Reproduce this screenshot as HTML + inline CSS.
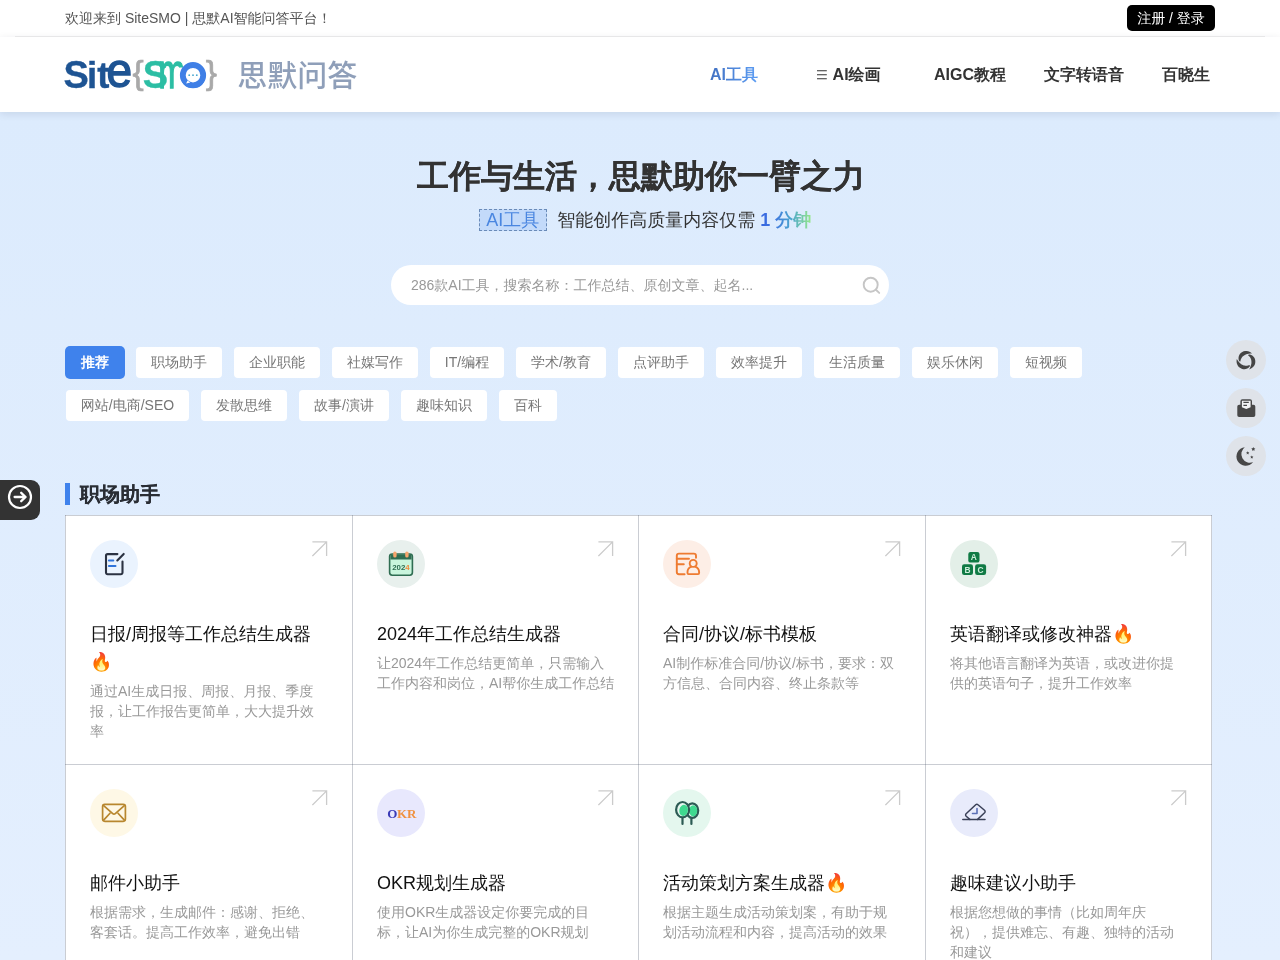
<!DOCTYPE html>
<html lang="zh-CN">
<head>
<meta charset="utf-8">
<title>SiteSMO | 思默AI智能问答平台</title>
<style>
*{box-sizing:border-box;margin:0;padding:0}
html,body{width:1280px;height:960px;overflow:hidden}
body{font-family:"Liberation Sans","WenQuanYi Zen Hei",sans-serif;font-size:14px;color:#333;background:linear-gradient(180deg,#dcebfd 112px,#e4effe 960px) #e0edfd;position:relative}
b,.b{font-weight:800}
a{text-decoration:none;color:inherit}
#wrap{position:absolute;left:0;top:0;width:1280px;height:960px;overflow:hidden;will-change:transform}
.topbar{position:absolute;left:0;top:0;width:1280px;height:37px;background:#fff}
.topbar .line{position:absolute;left:15px;top:36px;width:1250px;height:1px;background:#eee}
.topbar .welcome{position:absolute;left:65px;top:0;line-height:36px;font-size:14px;color:#555}
.topbar .login{position:absolute;left:1127px;top:5px;width:88px;height:26px;background:#000;color:#fff;border-radius:5px;line-height:26px;text-align:center;font-size:14px}
.header{position:absolute;left:0;top:37px;width:1280px;height:75px;background:#fff;box-shadow:0 2px 8px rgba(0,20,50,.1)}
.logo{position:absolute;left:60px;top:13px;width:310px;height:50px}
.nav a{position:absolute;top:0;line-height:75px;font-size:16px;font-weight:800;color:#333;white-space:nowrap}
.nav a.on{background:linear-gradient(90deg,#4271c2,#5c9df4);-webkit-background-clip:text;background-clip:text;color:transparent}
.hero h1{position:absolute;left:1px;top:153px;width:1280px;-webkit-text-stroke:.14px #333;text-align:center;font-size:32px;line-height:46px;font-weight:800;color:#333}
.hero .sub{position:absolute;left:0;top:206px;width:1280px;padding-left:10px;text-align:center;font-size:18px;line-height:28px;color:#333}
.hero .sub .tagbox{display:inline-block;border:1px dashed #6a8bb8;background:#c3dafa;color:#4a86e0;padding:0 6.5px;line-height:20px;margin-right:5.5px;font-size:18px}
.hero .sub .num{font-weight:800;color:#3b6fd0}
.hero .sub .min{font-weight:800;background:linear-gradient(90deg,#3766e0 0%,#3f76e0 28%,#4ba6cc 62%,#98e88a 100%);-webkit-background-clip:text;background-clip:text;color:transparent}
.search{position:absolute;left:391px;top:265px;width:498px;height:40px;border-radius:20px;background:#fff}
.search span{position:absolute;left:20px;top:0;line-height:40px;font-size:14px;color:#999}
.search svg{position:absolute;left:471px;top:11px}
.tags a{position:absolute;height:31px;line-height:31px;border-radius:4px;background:#fff;color:#777;font-size:14px;text-align:center;white-space:nowrap}
.tags a.on{background:#3f82ec;color:#fff;font-weight:800;height:33px;line-height:33px;border-radius:5px}
.sect{position:absolute;left:65px;top:483px;height:22px;border-left:5px solid #3f82ec;padding-left:10px;font-size:20px;line-height:22px;font-weight:800;color:#2a2e35;-webkit-text-stroke:.1px #2a2e35}
.grid{position:absolute;left:65px;top:515px;width:1147px;height:445px;background:#fff}
.vl{position:absolute;top:0;width:1px;height:445px;background:rgba(80,90,110,.3)}
.hl{position:absolute;left:0;width:1147px;height:1px;background:rgba(80,90,110,.3)}
.card{position:absolute;height:248px;padding:24px 0 0 24px}
.card .ic{position:relative;width:48px;height:48px;border-radius:50%}
.card .ic svg{position:absolute;left:0;top:0}
.card .arr{position:absolute;right:24px;top:25px}
.card h3{margin-top:32px;width:237.6px;font-size:18px;line-height:28px;font-weight:400;color:#111}
.card p{margin-top:5px;width:237.6px;font-size:14px;line-height:20px;color:#999}
.ltab{position:absolute;left:0;top:480px;width:40px;height:40px;background:#333;border-radius:0 9px 9px 0}
.rbtn{position:absolute;left:1226px;width:40px;height:40px;border-radius:50%;background:#dfe3e9}
</style>
</head>
<body>
<div id="wrap">
<div class="topbar">
  <div class="welcome">欢迎来到 SiteSMO | 思默AI智能问答平台！</div>
  <div class="login">注册 / 登录</div>
  <div class="line"></div>
</div>
<div class="header">
  <div class="logo"><svg width="310" height="50" viewBox="0 0 310 50" font-family="Liberation Sans, sans-serif" font-weight="bold"><defs><clipPath id="mc"><rect x="96" y="0" width="30" height="17.500"/><rect x="96" y="17.500" width="22" height="33"/></clipPath></defs><text x="3.600" y="37.700" font-size="38" fill="#1e5493" stroke="#1e5493" stroke-width=".3">S</text><text x="27 37.300" y="37.700" font-size="36.500" fill="#1e5493" stroke="#1e5493" stroke-width=".4">it</text><text transform="translate(46.600 37.400) scale(.93 .955)" font-size="49.500" font-weight="normal" fill="#1e5493" stroke="#1e5493" stroke-width="1.500">e</text><text x="72.600" y="33.800" font-size="33.500" font-weight="normal" fill="#a9a9a9" stroke="#a9a9a9" stroke-width=".7">{</text><text x="145.800" y="33.800" font-size="33.500" font-weight="normal" fill="#a9a9a9" stroke="#a9a9a9" stroke-width=".7">}</text><text x="82.700" y="37.700" font-size="38" fill="#2cbea4" stroke="#2cbea4" stroke-width=".3">S</text><g clip-path="url(#mc)"><text transform="translate(98.600 37.500) scale(.64 .975)" font-size="49.500" font-weight="normal" fill="#2cbea4" stroke="#2cbea4" stroke-width="1.600">m</text></g><text x="119.400" y="37.900" font-size="35" fill="#3f7fe6">O</text><circle cx="133" cy="25.200" r="10.200" fill="#fff" stroke="#3f7fe6" stroke-width="5.800"/><path d="M127.600 30.400l-1.500 3.200 4.200-1.200z" fill="#fff"/><circle cx="129.200" cy="25.200" r=".9" fill="#49a6cf"/><circle cx="133" cy="25.200" r=".9" fill="#49a6cf"/><circle cx="136.800" cy="25.200" r=".9" fill="#49a6cf"/><text x="177.300" y="36" font-family="Liberation Sans, Noto Sans CJK SC, WenQuanYi Zen Hei, sans-serif" font-weight="500" font-size="30" fill="#8f9fb9">思默问答</text></svg></div>
  <div class="nav">
    <a class="on" style="left:710px">AI工具</a>
    <a style="left:817px"><svg width="10" height="10" viewBox="0 0 10 10" style="position:absolute;left:0;top:32.5px" stroke="#333" stroke-width="1.100"><path d="M0 .7h9.800M0 4.800h9.800M0 8.800h9.800"/></svg><span style="margin-left:15.600px">AI绘画</span></a>
    <a style="left:934px">AIGC教程</a>
    <a style="left:1044px">文字转语音</a>
    <a style="left:1162px">百晓生</a>
  </div>
</div>
<div class="hero">
  <h1>工作与生活，思默助你一臂之力</h1>
  <div class="sub"><span class="tagbox">AI工具</span> 智能创作高质量内容仅需 <span class="min">1 分钟</span></div>
</div>
<div class="search"><span>286款AI工具，搜索名称：工作总结、原创文章、起名...</span>
<svg width="20" height="20" viewBox="0 0 20 20" fill="none" stroke="#c6c6c6" stroke-width="1.900" stroke-linecap="round"><circle cx="8.700" cy="8.700" r="7"/><path d="M13.900 13.800l3.300 3.100"/></svg></div>
<div class="tags">
  <a class="on" style="left:65px;top:346px;width:60px">推荐</a>
  <a style="left:136px;top:347px;width:86px">职场助手</a>
  <a style="left:234px;top:347px;width:86px">企业职能</a>
  <a style="left:332px;top:347px;width:86px">社媒写作</a>
  <a style="left:430px;top:347px;width:74px">IT/编程</a>
  <a style="left:516px;top:347px;width:90px">学术/教育</a>
  <a style="left:618px;top:347px;width:86px">点评助手</a>
  <a style="left:716px;top:347px;width:86px">效率提升</a>
  <a style="left:814px;top:347px;width:86px">生活质量</a>
  <a style="left:912px;top:347px;width:86px">娱乐休闲</a>
  <a style="left:1010px;top:347px;width:72px">短视频</a>
  <a style="left:66px;top:390px;width:123px">网站/电商/SEO</a>
  <a style="left:201px;top:390px;width:86px">发散思维</a>
  <a style="left:299px;top:390px;width:90px">故事/演讲</a>
  <a style="left:401px;top:390px;width:86px">趣味知识</a>
  <a style="left:499px;top:390px;width:58px">百科</a>
</div>
<div class="sect">职场助手</div>
<div class="grid">
<div class="vl" style="left:0px"></div><div class="vl" style="left:287px"></div><div class="vl" style="left:573px"></div><div class="vl" style="left:860px"></div><div class="vl" style="left:1146px"></div><div class="hl" style="top:0"></div><div class="hl" style="top:249px"></div>
<div class="card" style="left:1px;top:1px;width:286px"><div class="ic" style="background:#eaf3fe"><svg width="48" height="48" viewBox="0 0 48 48" fill="none" stroke-linecap="round" stroke-linejoin="round"><path d="M27.4 14.1H17.6a1.6 1.6 0 0 0-1.6 1.6v16.9a1.6 1.6 0 0 0 1.6 1.6h13.3a1.6 1.6 0 0 0 1.6-1.6V21.6" stroke="#2b3242" stroke-width="2.1"/><path d="M33.7 13.9l-6.4 6.6" stroke="#2b3242" stroke-width="2.1"/><path d="M18.9 20.6h4.4M18.9 26.1h6.6" stroke="#2f73d9" stroke-width="2"/></svg></div><svg class="arr" width="16" height="16" viewBox="0 0 16 16" fill="none" stroke="#cbcbcb" stroke-width="1.300"><path d="M.4.900h14.200v14M14.600.900L.4 15.100"/></svg><h3>日报/周报等工作总结生成器🔥</h3><p>通过AI生成日报、周报、月报、季度报，让工作报告更简单，大大提升效率</p></div>
<div class="card" style="left:288px;top:1px;width:285px"><div class="ic" style="background:#e8f0ed"><svg width="48" height="48" viewBox="0 0 48 48"><rect x="12.6" y="14" width="22.8" height="21.2" rx="2.6" fill="#c9f5dd" stroke="#2f6d52" stroke-width="1.6"/><path d="M13.4 19.6V16.4a1.8 1.8 0 0 1 1.8-1.8h17.6a1.8 1.8 0 0 1 1.8 1.8v3.2z" fill="#2f6d52"/><rect x="16.200" y="11.400" width="3.400" height="6.200" rx="1.700" fill="#f6a56d"/><rect x="28.200" y="11.400" width="3.400" height="6.200" rx="1.700" fill="#f6a56d"/><text x="15.2" y="29.6" font-family="Liberation Sans, sans-serif" font-weight="bold" font-size="6.6" fill="#2f6d52" textLength="17.5" lengthAdjust="spacingAndGlyphs">202<tspan fill="#f08a3c">4</tspan></text></svg></div><svg class="arr" width="16" height="16" viewBox="0 0 16 16" fill="none" stroke="#cbcbcb" stroke-width="1.300"><path d="M.4.900h14.200v14M14.600.900L.4 15.100"/></svg><h3>2024年工作总结生成器</h3><p>让2024年工作总结更简单，只需输入工作内容和岗位，AI帮你生成工作总结</p></div>
<div class="card" style="left:574px;top:1px;width:286px"><div class="ic" style="background:#fdeee6"><svg width="48" height="48" viewBox="0 0 48 48" fill="none" stroke="#ee7b31" stroke-width="1.9" stroke-linecap="round" stroke-linejoin="round"><path d="M21.6 34.2H16a2.2 2.2 0 0 1-2.2-2.2V15.8A2.2 2.2 0 0 1 16 13.6h14.8a2.2 2.2 0 0 1 2.2 2.2v2"/><path d="M13.8 18.8h12.2M13.8 24.3h7"/><circle cx="30.2" cy="23.4" r="3.5"/><path d="M28.4 26.6c-2.6 1-3.9 2.8-3.9 5.400v1.1a1 1 0 0 0 1 1h9.600a1 1 0 0 0 1-1V32c0-2.600-1.400-4.400-4-5.400"/></svg></div><svg class="arr" width="16" height="16" viewBox="0 0 16 16" fill="none" stroke="#cbcbcb" stroke-width="1.300"><path d="M.4.900h14.200v14M14.600.900L.4 15.100"/></svg><h3>合同/协议/标书模板</h3><p>AI制作标准合同/协议/标书，要求：双方信息、合同内容、终止条款等</p></div>
<div class="card" style="left:861px;top:1px;width:285px"><div class="ic" style="background:#e3efe8"><svg width="48" height="48" viewBox="0 0 48 48" font-family="Liberation Sans, sans-serif" font-weight="bold" font-size="8.4" text-anchor="middle" fill="#cdeeda"><rect x="18.300" y="11.900" width="11.200" height="10.700" rx="2.200" fill="#0f7a44"/><rect x="12" y="24.300" width="11" height="10.700" rx="2.200" fill="#0f7a44"/><rect x="25.100" y="24.300" width="11" height="10.700" rx="2.200" fill="#0f7a44"/><text x="23.900" y="20.300">A</text><text x="17.500" y="32.700">B</text><text x="30.600" y="32.700">C</text></svg></div><svg class="arr" width="16" height="16" viewBox="0 0 16 16" fill="none" stroke="#cbcbcb" stroke-width="1.300"><path d="M.4.900h14.200v14M14.600.900L.4 15.100"/></svg><h3>英语翻译或修改神器🔥</h3><p>将其他语言翻译为英语，或改进你提供的英语句子，提升工作效率</p></div>
<div class="card" style="left:1px;top:250px;width:286px"><div class="ic" style="background:#fef8e6"><svg width="48" height="48" viewBox="0 0 48 48" fill="none" stroke="#b8872f" stroke-width="1.7" stroke-linecap="round" stroke-linejoin="round"><rect x="12.600" y="15.300" width="22.800" height="17" rx="2.200"/><path d="M13.400 16.300l9.300 8.300a2 2 0 0 0 2.600 0l9.300-8.300"/><path d="M13.400 31.400l6.600-7.200M34.600 31.400L28 24.200"/></svg></div><svg class="arr" width="16" height="16" viewBox="0 0 16 16" fill="none" stroke="#cbcbcb" stroke-width="1.300"><path d="M.4.900h14.200v14M14.600.900L.4 15.100"/></svg><h3>邮件小助手</h3><p>根据需求，生成邮件：感谢、拒绝、客套话。提高工作效率，避免出错</p></div>
<div class="card" style="left:288px;top:250px;width:285px"><div class="ic" style="background:#e8e8fd"><svg width="48" height="48" viewBox="0 0 48 48"><text x="10.300" y="28.900" font-family="Liberation Serif, serif" font-weight="bold" font-size="13" fill="#f0913f" textLength="29" lengthAdjust="spacing"><tspan fill="#3b3bb7">O</tspan>KR</text></svg></div><svg class="arr" width="16" height="16" viewBox="0 0 16 16" fill="none" stroke="#cbcbcb" stroke-width="1.300"><path d="M.4.900h14.200v14M14.600.900L.4 15.100"/></svg><h3>OKR规划生成器</h3><p>使用OKR生成器设定你要完成的目标，让AI为你生成完整的OKR规划</p></div>
<div class="card" style="left:574px;top:250px;width:286px"><div class="ic" style="background:#e4f7ee"><svg width="48" height="48" viewBox="0 0 48 48" stroke="#2c5b54" stroke-width="2.200" stroke-linecap="round"><ellipse cx="29.300" cy="21.600" rx="5.900" ry="7.300" fill="#e6f8f0"/><ellipse cx="30.200" cy="21.800" rx="4" ry="5.600" fill="#3fd98f" stroke="none"/><path d="M28.400 29.600v5.400M19.500 29.400v5.600" fill="none"/><ellipse cx="19.600" cy="20.700" rx="6.500" ry="7.700" fill="#e6f8f0"/><ellipse cx="20.600" cy="21.400" rx="4.300" ry="5.600" fill="#3fd98f" stroke="none" transform="rotate(14 20.600 21.400)"/></svg></div><svg class="arr" width="16" height="16" viewBox="0 0 16 16" fill="none" stroke="#cbcbcb" stroke-width="1.300"><path d="M.4.900h14.200v14M14.600.900L.4 15.100"/></svg><h3>活动策划方案生成器🔥</h3><p>根据主题生成活动策划案，有助于规划活动流程和内容，提高活动的效果</p></div>
<div class="card" style="left:861px;top:250px;width:285px"><div class="ic" style="background:#e8ebfb"><svg width="48" height="48" viewBox="0 0 48 48" fill="none" stroke="#3a4057" stroke-width="1.500" stroke-linecap="round" stroke-linejoin="round"><path d="M12.800 30.500h22.200"/><path d="M19.800 30.400l-3.600-3.100a1.700 1.700 0 0 1-.1-2.500l9.600-9.100a1.700 1.700 0 0 1 2.300 0l6.500 5.600a1.700 1.700 0 0 1 .1 2.500l-7 6.600"/><path d="M27 19.600v4.900h-4.500" stroke="#5b70b6" stroke-width="1.600"/></svg></div><svg class="arr" width="16" height="16" viewBox="0 0 16 16" fill="none" stroke="#cbcbcb" stroke-width="1.300"><path d="M.4.900h14.200v14M14.600.900L.4 15.100"/></svg><h3>趣味建议小助手</h3><p>根据您想做的事情（比如周年庆祝），提供难忘、有趣、独特的活动和建议</p></div>
</div>
<div class="ltab"><svg width="40" height="40" viewBox="0 0 40 40" fill="none" stroke="#fff" stroke-linecap="round" stroke-linejoin="round"><circle cx="20" cy="17" r="11" stroke-width="2.200"/><path d="M14.600 17h10.400M21.200 12.800l4.400 4.200-4.400 4.200" stroke-width="2.300"/></svg></div>
<div class="rbtn" style="top:340px"><svg width="40" height="40" viewBox="-20 -20.600 40 40" fill="#454545"><g id="bl"><path d="M-6.77 0.65L-7.21 -0.45L-7.46 -1.66L-7.47 -2.96L-7.23 -4.28L-6.73 -5.58L-5.96 -6.79L-4.93 -7.81L-3.70 -8.62L-2.34 -9.24L-0.87 -9.58L0.65 -9.59L2.14 -9.33L3.55 -8.82L4.86 -8.09L6.01 -7.16L4.19 -7.07L2.68 -6.86L1.40 -6.59L0.29 -6.28L-0.69 -5.89L-1.55 -5.40L-2.31 -4.88L-3.01 -4.35L-3.62 -3.75L-4.13 -3.07L-4.57 -2.36L-4.98 -1.62L-5.30 -0.81L-5.49 0.06L-5.53 0.98z"/></g><use href="#bl" transform="rotate(120)"/><use href="#bl" transform="rotate(240)"/></svg></div>
<div class="rbtn" style="top:388px"><svg width="40" height="40" viewBox="0 0 40 40"><path d="M14.400 13.300a2 2 0 0 1 2-2h7.600a2 2 0 0 1 2 2v3.400h1.500a1.800 1.800 0 0 1 1.800 1.800v8.800a1.800 1.800 0 0 1-1.800 1.800H13.100a1.800 1.800 0 0 1-1.800-1.800v-8.800a1.800 1.800 0 0 1 1.800-1.800h1.300z" fill="#484848"/><path d="M15.900 12.700h8.700v6.600l-4.350 1.700-4.350-1.700z" fill="#f2f3f5"/><path d="M17.400 14.300h5.400M17.400 17.300h3.600" stroke="#484848" stroke-width="1.300"/></svg></div>
<div class="rbtn" style="top:436px"><svg width="40" height="40" viewBox="0 0 40 40" fill="#474747"><path d="M18.800 11.200a9.300 9.300 0 1 0 8.300 14.900a8.600 8.600 0 0 1-8.300-14.900z"/><path id="st" d="M0-1.900l.56 1.130 1.250.18-.9.880.21 1.240L0 .94l-1.120.59.21-1.240-.9-.88 1.250-.18z" transform="translate(27.300 13.100) scale(1.150)"/><path d="M0-1.900l.56 1.130 1.250.18-.9.880.21 1.240L0 .94l-1.120.59.21-1.240-.9-.88 1.250-.18z" transform="translate(21.700 17) scale(.9)"/><path d="M0-1.900l.56 1.130 1.250.18-.9.880.21 1.240L0 .94l-1.120.59.21-1.240-.9-.88 1.250-.18z" transform="translate(25.800 21.100) scale(.9)"/></svg></div>
</div>
</body>
</html>
